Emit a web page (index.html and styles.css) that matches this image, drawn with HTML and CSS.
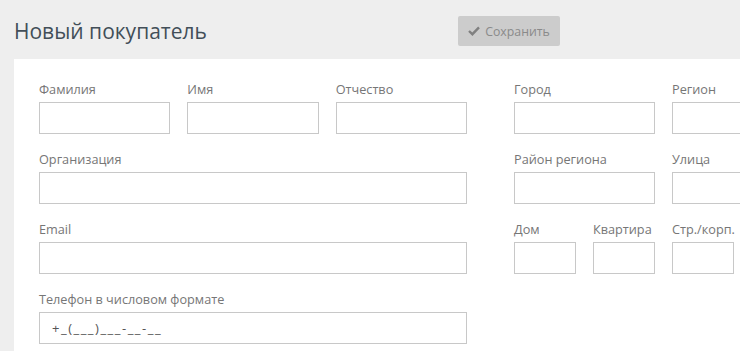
FILE: index.html
```html
<!DOCTYPE html>
<html lang="ru">
<head>
<meta charset="utf-8">
<link rel="stylesheet" href="styles.css">
</head>
<body>
<div class="page">
  <header class="header">
    <h1 class="title">Новый покупатель</h1>
    <button class="save-btn" type="button">
      <svg class="check" width="12" height="10" viewBox="0 0 12 10"><path d="M1 5 L4.4 8.2 L11 1.4" fill="none" stroke="#808080" stroke-width="2.4"/></svg>
      <span>Сохранить</span>
    </button>
  </header>
  <main class="panel">
    <div class="left-block">
      <div class="field"><label class="lbl">Фамилия</label><div class="inp"></div></div>
      <div class="field"><label class="lbl">Имя</label><div class="inp"></div></div>
      <div class="field"><label class="lbl">Отчество</label><div class="inp"></div></div>
      <div class="field span3"><label class="lbl">Организация</label><div class="inp"></div></div>
      <div class="field span3"><label class="lbl">Email</label><div class="inp"></div></div>
      <div class="field span3"><label class="lbl">Телефон в числовом формате</label><div class="inp mask">+_(___)___-__-__</div></div>
    </div>
    <div class="right-block">
      <div class="field span2"><label class="lbl">Город</label><div class="inp"></div></div>
      <div class="field span2"><label class="lbl">Регион</label><div class="inp"></div></div>
      <div class="field span2"><label class="lbl">Район региона</label><div class="inp"></div></div>
      <div class="field span2"><label class="lbl">Улица</label><div class="inp"></div></div>
      <div class="field"><label class="lbl">Дом</label><div class="inp"></div></div>
      <div class="field"><label class="lbl">Квартира</label><div class="inp"></div></div>
      <div class="field"><label class="lbl">Стр./корп.</label><div class="inp"></div></div>
    </div>
  </main>
</div>
</body>
</html>
```
FILE: styles.css
```css
html, body {
  margin: 0;
  padding: 0;
  width: 740px;
  height: 351px;
  overflow: hidden;
  background: #eeeeee;
  font-family: "Open Sans", "Noto Sans", sans-serif;
}
.page {
  width: 740px;
  height: 351px;
  overflow: hidden;
}
.header {
  display: flex;
  align-items: center;
  height: 59px;
  padding-left: 14px;
  box-sizing: border-box;
}
.title {
  margin: 0;
  width: 444px;
  font-size: 21px;
  font-weight: 400;
  color: #424e58;
  line-height: 28px;
  padding-top: 3px;
}
.save-btn {
  display: flex;
  align-items: center;
  justify-content: center;
  gap: 5px;
  width: 102px;
  height: 30px;
  margin-top: 3px;
  padding: 0;
  border: none;
  border-radius: 2px;
  background: #cccccc;
  color: #8a8a8a;
  font-family: "Open Sans", "Noto Sans", sans-serif;
  font-size: 12.3px;
}
.check { display: block; }
.panel {
  display: flex;
  gap: 47px;
  margin-left: 14px;
  width: 900px;
  height: 292px;
  background: #ffffff;
  padding: 21px 0 0 25px;
  box-sizing: border-box;
}
.left-block {
  display: grid;
  grid-template-columns: repeat(3, 1fr);
  column-gap: 17px;
  row-gap: 16px;
  width: 428px;
  flex: none;
  align-content: start;
}
.right-block {
  display: grid;
  grid-template-columns: repeat(4, 62px);
  column-gap: 17px;
  row-gap: 16px;
  flex: none;
  align-content: start;
}
.span3 { grid-column: span 3; }
.span2 { grid-column: span 2; }
.field {
  display: flex;
  flex-direction: column;
}
.lbl {
  display: block;
  font-size: 12.7px;
  line-height: 18px;
  color: #767676;
  margin-bottom: 4px;
  white-space: nowrap;
}
.inp {
  height: 32px;
  border: 1px solid #c8c8c8;
  box-sizing: border-box;
  background: #fff;
}
.mask {
  font-size: 13px;
  letter-spacing: 1.5px;
  line-height: 30px;
  color: #555;
  padding-left: 12px;
}
```
